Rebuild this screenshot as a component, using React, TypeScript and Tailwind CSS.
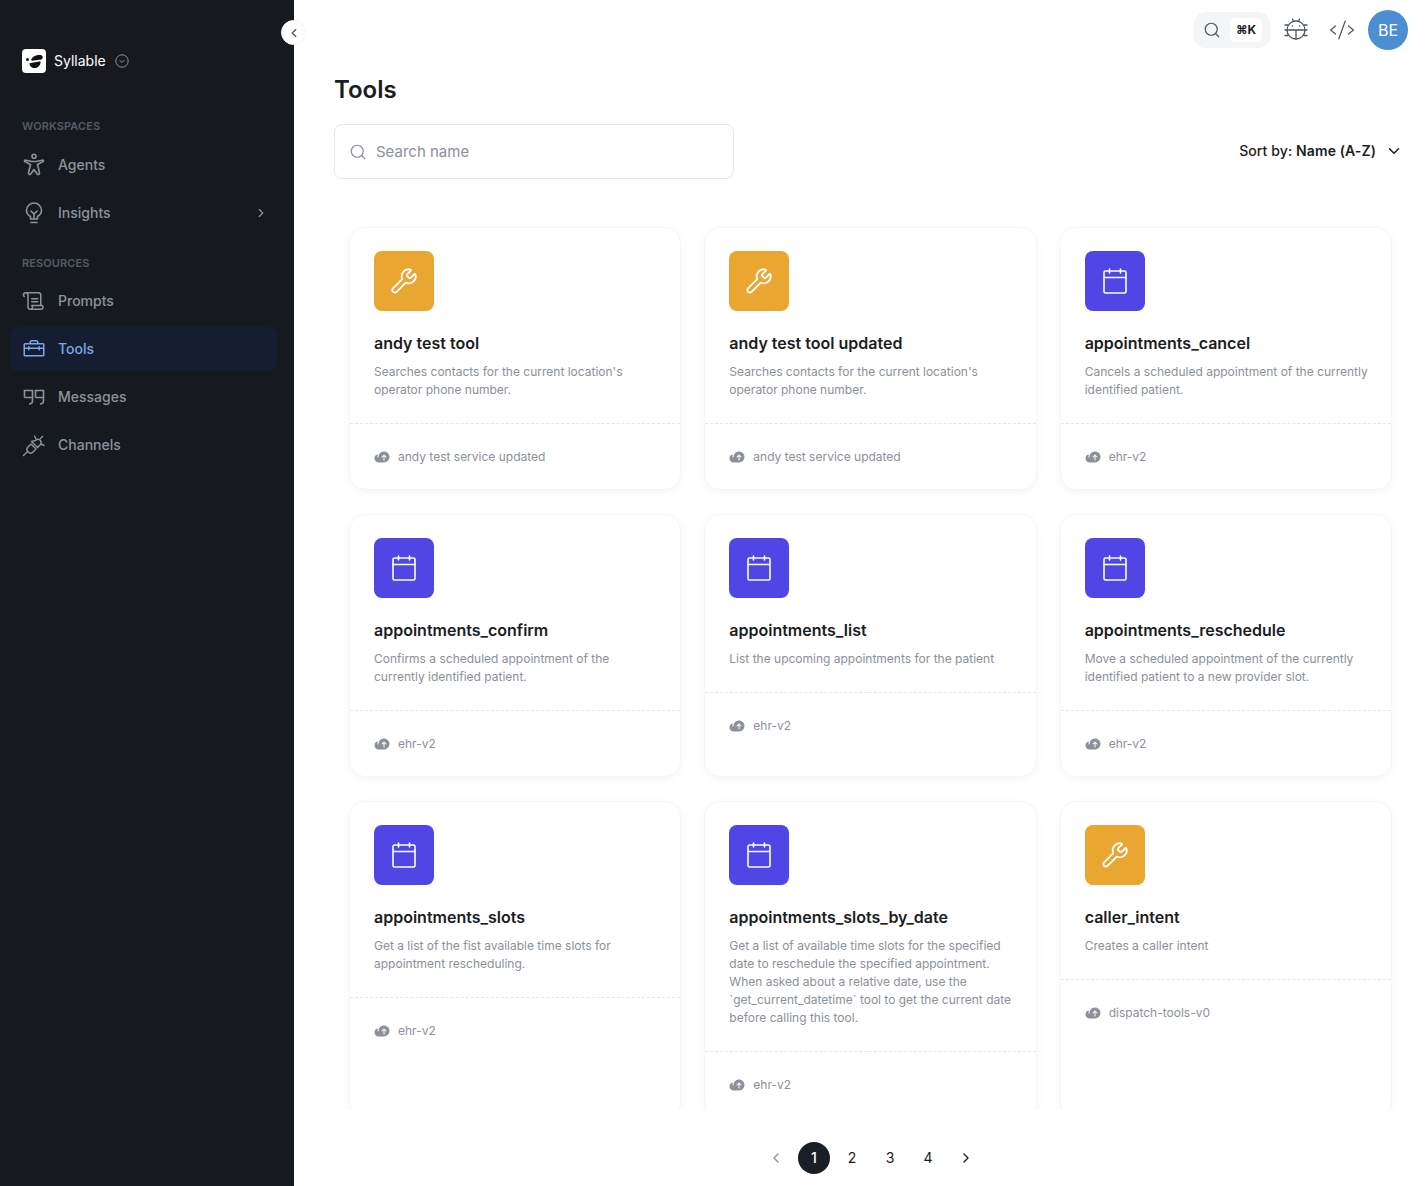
import { ChevronDown, ChevronLeft, ChevronRight, Search, Wrench } from "lucide-react";
import { PiCloudArrowUpFill, PiCodeLight, PiScroll, PiToolbox } from "react-icons/pi";
import type { ReactNode } from "react";

type Tool = {
  name: string;
  description: string;
  service: string;
  kind: "wrench" | "calendar";
};

const tools: Tool[] = [
  { name: "andy test tool", description: "Searches contacts for the current location's operator phone number.", service: "andy test service updated", kind: "wrench" },
  { name: "andy test tool updated", description: "Searches contacts for the current location's operator phone number.", service: "andy test service updated", kind: "wrench" },
  { name: "appointments_cancel", description: "Cancels a scheduled appointment of the currently identified patient.", service: "ehr-v2", kind: "calendar" },
  { name: "appointments_confirm", description: "Confirms a scheduled appointment of the currently identified patient.", service: "ehr-v2", kind: "calendar" },
  { name: "appointments_list", description: "List the upcoming appointments for the patient", service: "ehr-v2", kind: "calendar" },
  { name: "appointments_reschedule", description: "Move a scheduled appointment of the currently identified patient to a new provider slot.", service: "ehr-v2", kind: "calendar" },
  { name: "appointments_slots", description: "Get a list of the fist available time slots for appointment rescheduling.", service: "ehr-v2", kind: "calendar" },
  { name: "appointments_slots_by_date", description: "Get a list of available time slots for the specified date to reschedule the specified appointment. When asked about a relative date, use the `get_current_datetime` tool to get the current date before calling this tool.", service: "ehr-v2", kind: "calendar" },
  { name: "caller_intent", description: "Creates a caller intent", service: "dispatch-tools-v0", kind: "wrench" },
];

const CalendarGlyph = () => (
  <svg width="24" height="26" viewBox="0 0 24 26" fill="none" stroke="white" strokeWidth="1.6" strokeLinecap="round" strokeLinejoin="round">
    <rect x="1" y="3" width="22" height="22" rx="1.5" />
    <path d="M1 9.5h22M6.5 1v4M17.5 1v4" />
  </svg>
);

const AgentGlyph = () => (
  <svg width="24" height="24" viewBox="0 0 24 24" fill="none" stroke="currentColor" strokeWidth="1.6" strokeLinejoin="round">
    <circle cx="12" cy="3.2" r="2" />
    <path d="M2.600 8.400C2.200 7.600 2.800 7 3.800 7.200L10 8.500h4l6.200-1.300c1-.2 1.600.4 1.200 1.200L15.500 11.500l2 8.500c.3 1.500-1.500 2-2.200 1L12 16.500 8.700 21c-.7 1-2.500.5-2.200-1l2-8.500z" />
  </svg>
);

const BulbGlyph = () => (
  <svg width="24" height="24" viewBox="0 0 24 24" fill="none" stroke="currentColor" strokeWidth="1.6" strokeLinecap="round" strokeLinejoin="round">
    <path d="M8.500 18v-2.500C6 14 4.500 12 4.500 9.500a7.500 7.500 0 0 1 15 0c0 2.500-1.500 4.500-4 6V18z" />
    <path d="M9 10l3 3 3-3M12 13v5M9 21.500h6" />
  </svg>
);

const QuoteGlyph = () => (
  <svg width="24" height="24" viewBox="0 0 24 24" fill="none" stroke="currentColor" strokeWidth="1.6">
    <path d="M2.500 12.500v-7h8v10c0 2-1 3.500-3.500 3.500M2.500 12.500h8M13.500 12.500v-7h8v10c0 2-1 3.500-3.500 3.500M13.500 12.500h8" />
  </svg>
);

const PlugGlyph = () => (
  <svg width="24" height="24" viewBox="0 0 24 24" fill="none" stroke="currentColor" strokeWidth="1.4" strokeLinecap="round" strokeLinejoin="round">
    <path d="M1.500 22.500l4-4M9 11l-3.200 3.200a3 3 0 0 0 0 4.200l.8.800a3 3 0 0 0 4.200 0L14 16z" />
    <path d="M9.500 8.500l6 6 2.500-2.500c1.500-1.500 1.500-3 .5-4.500l-.5-.5C16.500 6 15 6 13.500 7.500zM18.500 5.500l2-2M14 6l-1.500-3M19 11l3 1.500" />
  </svg>
);

const BugGlyph = () => (
  <svg width="26" height="26" viewBox="0 0 26 26" fill="none" stroke="#4b5563" strokeWidth="1.300" strokeLinecap="round">
    <circle cx="13" cy="13" r="9" />
    <path d="M4 13h18M13 13v9M2 8h2.800M21.200 8H24M2 13h2M22 13h2M2 18.500h2.800M21.200 18.500H24M9.500 2l1 2M16.500 2l-1 2" />
    <circle cx="9.500" cy="9" r=".8" fill="#4b5563" stroke="none" />
    <circle cx="16.500" cy="9" r=".8" fill="#4b5563" stroke="none" />
  </svg>
);

const Logo = () => (
  <div className="flex h-6 w-6 items-center justify-center rounded-[4px] bg-white">
    <svg width="24" height="24" viewBox="0 0 24 24" fill="#111">
      <circle cx="5.500" cy="10.500" r="1.500" />
      <path d="M9 11C10 7.500 15 5.500 18.500 6c2.500.4 3 3 1 4.500L10 11.800z" />
      <path d="M7.500 14.200l11-2c.5 3-2 6.800-6 6.800-3 0-5-2-5-4.800z" />
    </svg>
  </div>
);

const NavItem = ({ icon, label, active, chevron }: { icon: ReactNode; label: string; active?: boolean; chevron?: boolean }) => (
  <div className={`flex h-11 items-center gap-3 rounded-lg px-3 ${active ? "bg-[#151e31] text-[#7ba7e8]" : "text-[#8d929b]"}`}>
    <span className="flex h-6 w-6 shrink-0 items-center justify-center">{icon}</span>
    <span className="flex-1 text-sm font-medium">{label}</span>
    {chevron && <ChevronRight className="-mr-[3px] h-3.5 w-3.5" />}
  </div>
);

const Sidebar = () => (
  <aside className="flex w-[294px] shrink-0 flex-col bg-[#161a1f] pt-[49px]">
    <div className="flex items-center gap-2 pl-[22px]">
      <Logo />
      <span className="text-sm text-white">Syllable</span>
      <svg className="ml-px" width="14" height="14" viewBox="0 0 14 14" fill="none" stroke="#8d929b" strokeWidth="1">
        <circle cx="7" cy="7" r="6.200" />
        <path d="M4.500 6l2.500 2.500L9.500 6" />
      </svg>
    </div>
    <div className="mb-[9px] mt-[45px] h-4 pl-[22px] text-[11px] font-semibold leading-4 tracking-[0.1px] text-[#555a63]">WORKSPACES</div>
    <nav className="flex flex-col gap-1 pl-2.5 pr-[17px]">
      <NavItem icon={<AgentGlyph />} label="Agents" />
      <NavItem icon={<BulbGlyph />} label="Insights" chevron />
    </nav>
    <div className="mb-2 mt-5 h-4 pl-[22px] text-[11px] font-semibold leading-4 tracking-[0.1px] text-[#555a63]">RESOURCES</div>
    <nav className="flex flex-col gap-1 pl-2.5 pr-[17px]">
      <NavItem icon={<PiScroll size={26} />} label="Prompts" />
      <NavItem active icon={<PiToolbox size={26} />} label="Tools" />
      <NavItem icon={<QuoteGlyph />} label="Messages" />
      <NavItem icon={<PlugGlyph />} label="Channels" />
    </nav>
  </aside>
);

const ToolCard = ({ tool }: { tool: Tool }) => (
  <div className="flex flex-col rounded-2xl border border-[#f5f6f7] bg-white shadow-[0_2px_8px_rgba(17,24,39,0.04)]">
    <div className="pb-6 pl-6 pr-[21px] pt-[23px]">
      <div className={`flex h-[60px] w-[60px] items-center justify-center rounded-lg ${tool.kind === "wrench" ? "bg-[#e9a631]" : "bg-[#4f46e5]"}`}>
        {tool.kind === "wrench" ? <Wrench className="h-7 w-7 text-white" strokeWidth={1.6} /> : <CalendarGlyph />}
      </div>
      <div className="mt-5 text-base font-semibold leading-6 text-[#1a1d21]">{tool.name}</div>
      <p className="mt-2 text-xs leading-[18px] text-[#8b9099]">{tool.description}</p>
    </div>
    <div className="flex items-center gap-2 border-t border-dashed border-[#e5e7eb] px-6 pb-[23px] pt-6 text-xs leading-[18px] text-[#8b9099]">
      <PiCloudArrowUpFill size={16} className="text-[#8b9099]" />
      {tool.service}
    </div>
  </div>
);

const Pagination = () => (
  <div className="flex h-[76px] shrink-0 items-start justify-center pl-[23px] pt-8 text-sm text-[#1a1d21]">
    <span className="flex h-8 w-[38px] items-center justify-center text-[#8b9099]"><ChevronLeft className="h-4 w-4" /></span>
    <span className="mx-[3px] flex h-8 w-8 items-center justify-center rounded-full bg-[#1a1f25] font-medium text-white">1</span>
    <span className="mx-[3px] flex h-8 w-8 items-center justify-center">2</span>
    <span className="mx-[3px] flex h-8 w-8 items-center justify-center">3</span>
    <span className="mx-[3px] flex h-8 w-8 items-center justify-center">4</span>
    <span className="flex h-8 w-[38px] items-center justify-center"><ChevronRight className="h-4 w-4" /></span>
  </div>
);

export default function App() {
  return (
    <div className="relative flex h-screen overflow-hidden bg-white font-['Inter',sans-serif]">
      <Sidebar />
      {/* collapse toggle sits over the sidebar edge */}
      <button className="absolute left-[281px] top-5 z-10 flex h-[25px] w-[25px] items-center justify-center rounded-full border border-[#f3f4f6] bg-white text-[#4b5563]">
        <ChevronLeft className="h-3.5 w-3.5" />
      </button>
      <main className="flex min-w-0 flex-1 flex-col">
        <div className="flex h-[60px] shrink-0 items-center justify-end pr-[17px]">
          <div className="flex h-9 w-[76px] items-center gap-[9px] rounded-xl bg-[#f4f5f7] pl-[9px]">
            <Search className="h-[18px] w-[18px] text-[#4b5563]" strokeWidth={1.6} />
            <span className="flex h-6 w-8 items-center justify-center rounded-md bg-white text-xs font-bold text-[#1a1d21]">⌘K</span>
          </div>
          <span className="ml-[13px]"><BugGlyph /></span>
          <PiCodeLight size={26} className="ml-5 text-[#4b5563]" />
          <div className="ml-[13px] flex h-10 w-10 items-center justify-center rounded-full bg-[#4b8fd1] text-base text-white">BE</div>
        </div>
        <div className="pl-10">
          <h1 className="mt-[14px] text-2xl font-semibold leading-8 text-[#1a1d21]">Tools</h1>
          <div className="mt-[18px] flex items-center justify-between pr-[22px]">
            <div className="flex h-[55px] w-[400px] items-center gap-[9px] rounded-lg border border-[#e5e7eb] px-[14px] text-[15px] text-[#8b9099]">
              <Search className="h-[18px] w-[18px]" strokeWidth={1.6} />
              <span className="mt-px">Search name</span>
            </div>
            <div className="-mt-px flex items-center gap-[9px] text-sm font-medium tracking-[0.1px] text-[#1a1d21]">
              <span>Sort by: <span className="font-semibold">Name (A-Z)</span></span>
              <ChevronDown className="h-[18px] w-[18px]" />
            </div>
          </div>
        </div>
        <div className="mt-6 min-h-0 flex-1 overflow-hidden">
          <div className="grid grid-cols-3 gap-x-[23px] gap-y-6 pb-6 pl-[55px] pr-[33px] pt-6">
            {tools.map((tool) => (
              <ToolCard key={tool.name} tool={tool} />
            ))}
          </div>
        </div>
        <Pagination />
      </main>
    </div>
  );
}
